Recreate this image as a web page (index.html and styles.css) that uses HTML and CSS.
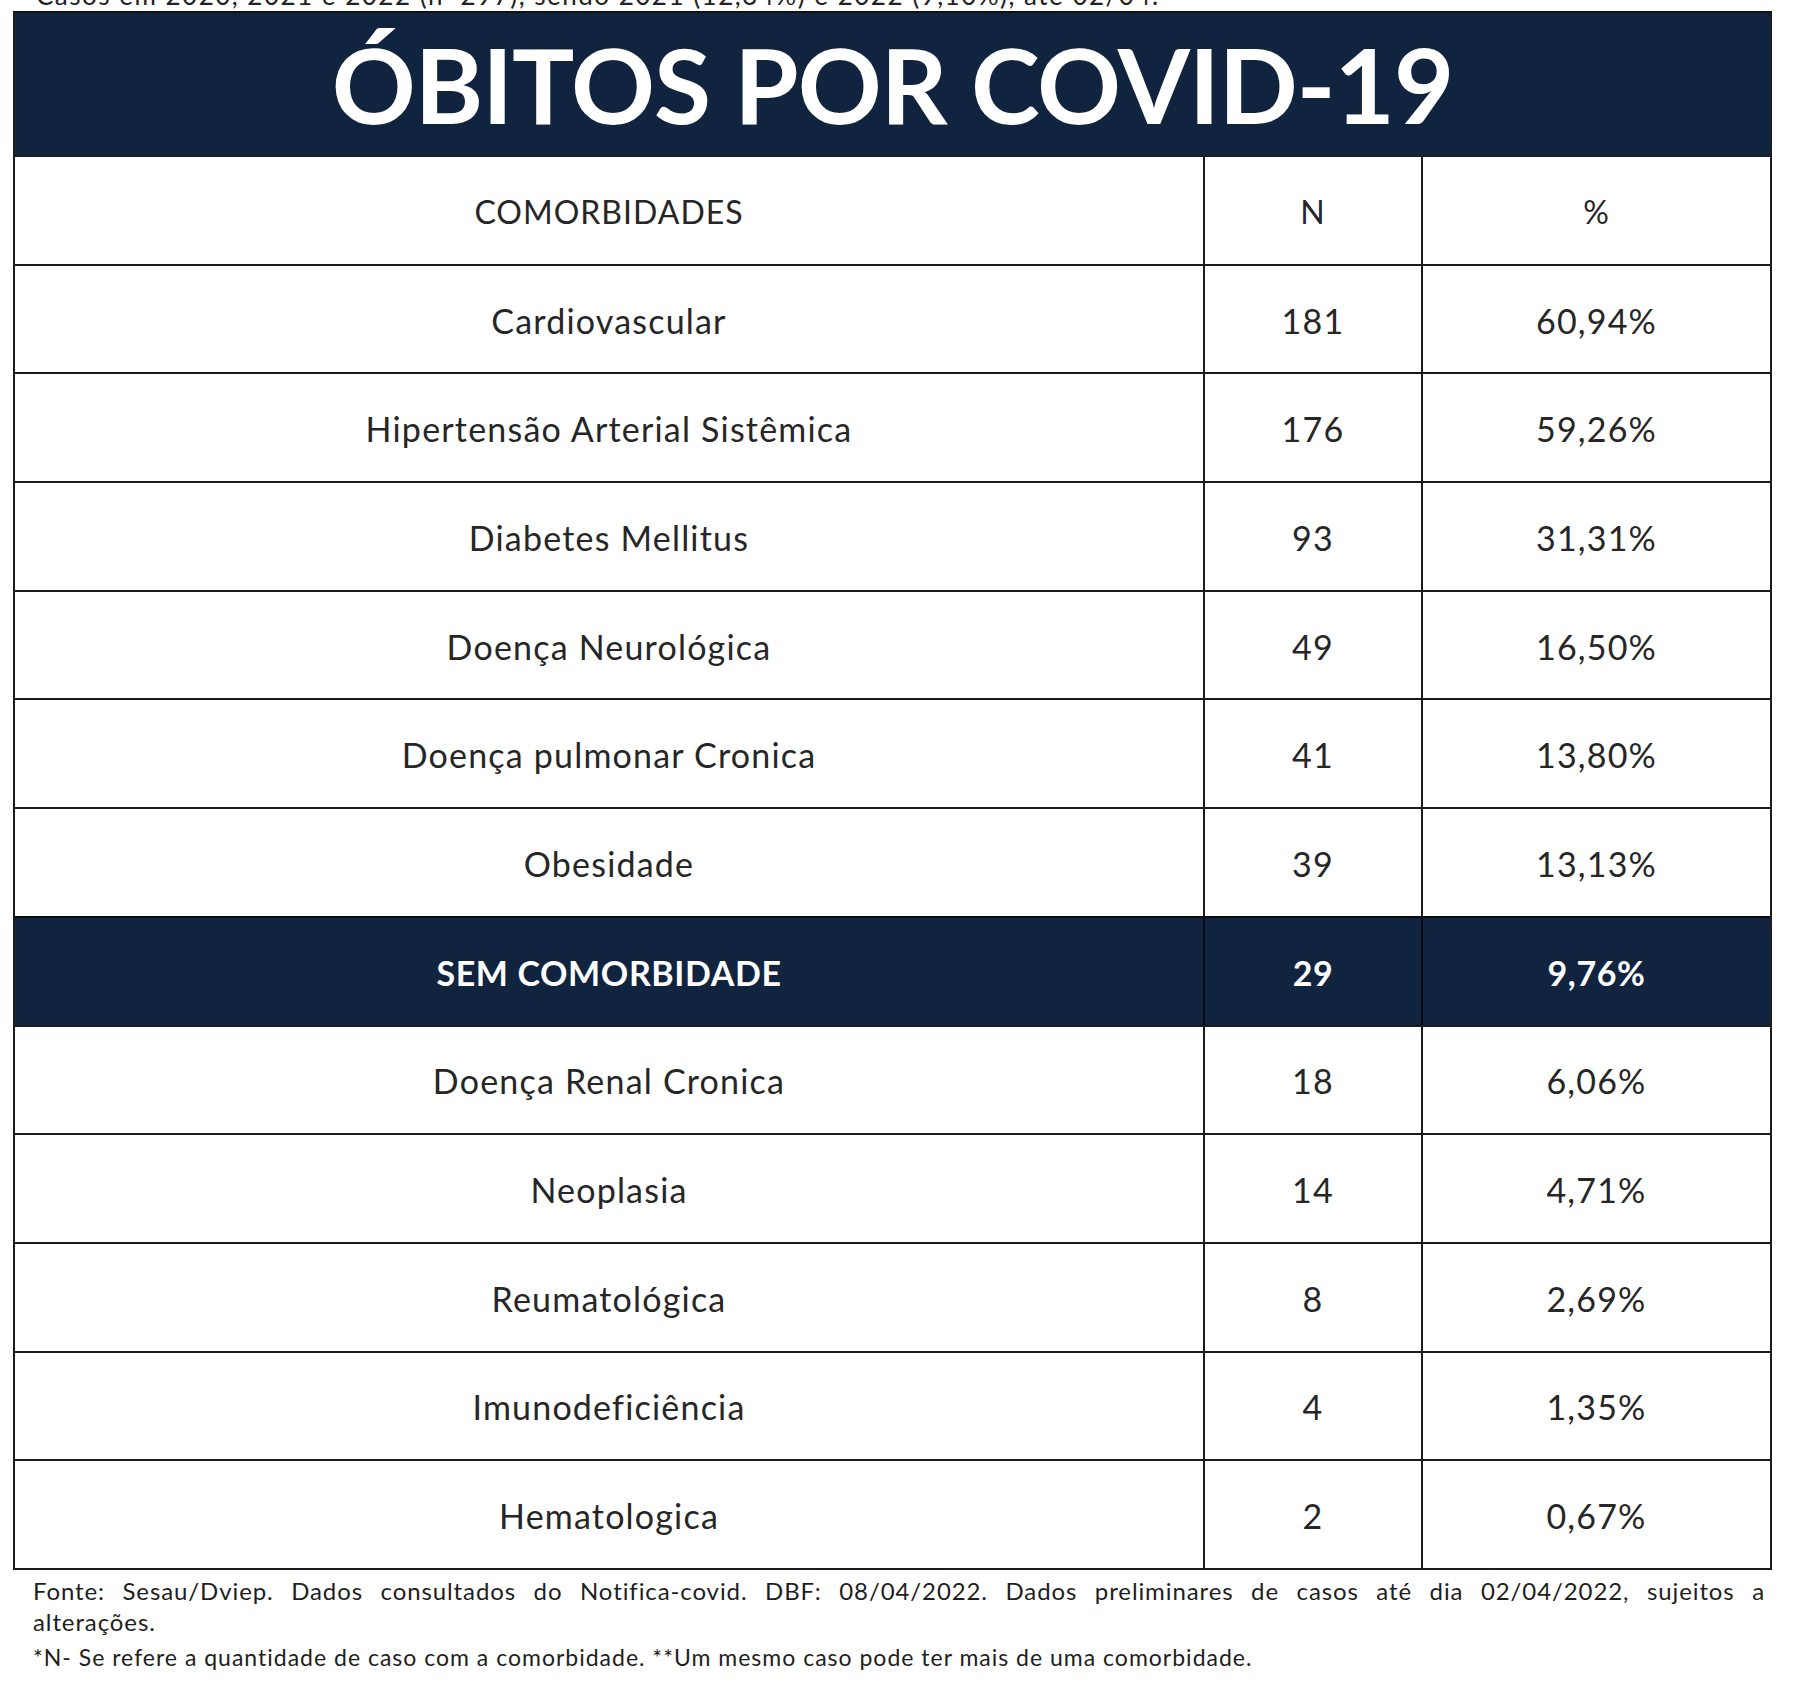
FILE: index.html
```html
<!DOCTYPE html>
<html lang="pt-BR">
<head>
<meta charset="utf-8">
<title>Óbitos por COVID-19 - Comorbidades</title>
<link rel="stylesheet" href="styles.css">
</head>
<body>
<div class="page">
  <div class="clip-line"><p>Casos em 2020, 2021 e 2022 (n=297), sendo 2021 (12,34%) e 2022 (9,10%), até 02/04.</p></div>
  <div class="sheet">
    <div class="title">ÓBITOS POR COVID-19</div>
    <div class="row head">
      <div class="cell">COMORBIDADES</div>
      <div class="cell">N</div>
      <div class="cell">%</div>
    </div>
    <div class="row"><div class="cell">Cardiovascular</div><div class="cell">181</div><div class="cell">60,94%</div></div>
    <div class="row"><div class="cell">Hipertensão Arterial Sistêmica</div><div class="cell">176</div><div class="cell">59,26%</div></div>
    <div class="row"><div class="cell">Diabetes Mellitus</div><div class="cell">93</div><div class="cell">31,31%</div></div>
    <div class="row"><div class="cell">Doença Neurológica</div><div class="cell">49</div><div class="cell">16,50%</div></div>
    <div class="row"><div class="cell">Doença pulmonar Cronica</div><div class="cell">41</div><div class="cell">13,80%</div></div>
    <div class="row"><div class="cell">Obesidade</div><div class="cell">39</div><div class="cell">13,13%</div></div>
    <div class="row highlight"><div class="cell">SEM COMORBIDADE</div><div class="cell">29</div><div class="cell">9,76%</div></div>
    <div class="row"><div class="cell">Doença Renal Cronica</div><div class="cell">18</div><div class="cell">6,06%</div></div>
    <div class="row"><div class="cell">Neoplasia</div><div class="cell">14</div><div class="cell">4,71%</div></div>
    <div class="row"><div class="cell">Reumatológica</div><div class="cell">8</div><div class="cell">2,69%</div></div>
    <div class="row"><div class="cell">Imunodeficiência</div><div class="cell">4</div><div class="cell">1,35%</div></div>
    <div class="row last"><div class="cell">Hematologica</div><div class="cell">2</div><div class="cell">0,67%</div></div>
  </div>
  <div class="notes">
    <p class="source">Fonte: Sesau/Dviep. Dados consultados do Notifica-covid. DBF: 08/04/2022. Dados preliminares de casos até dia 02/04/2022, sujeitos a</p>
    <p class="source-end">alterações.</p>
    <p class="remark">*N- Se refere a quantidade de caso com a comorbidade. **Um mesmo caso pode ter mais de uma comorbidade.</p>
  </div>
</div>
</body>
</html>
```

FILE: styles.css
```css
html, body {
  margin: 0;
  padding: 0;
  background: #ffffff;
}

body {
  font-family: Lato, "Open Sans", "Liberation Sans", sans-serif;
  color: #262626;
}

.page {
  width: 1800px;
  height: 1702px;
  overflow: hidden;
}

.clip-line {
  height: 9px;
  overflow: hidden;
  padding-left: 36px;
  margin-bottom: 2px;
}

.clip-line p {
  margin: -19px 0 0 0;
  font-size: 26px;
  line-height: 28px;
  letter-spacing: 1.5px;
  white-space: nowrap;
  color: #222;
}

.sheet {
  margin-left: 13px;
  width: 1759px;
  box-sizing: border-box;
  border-left: 2px solid #1c1c1c;
  border-right: 2px solid #1c1c1c;
}

.title {
  height: 144px;
  box-sizing: border-box;
  border-top: 2px solid #111;
  background: #10233f;
  color: #ffffff;
  font-weight: 700;
  font-size: 104px;
  line-height: 142px;
  text-align: center;
  letter-spacing: -1px;
}

.row {
  display: grid;
  grid-template-columns: 1188px 218px 1fr;
  height: 108.7px;
  box-sizing: border-box;
  border-top: 2px solid #1c1c1c;
}

.row.last {
  height: 110.7px;
  border-bottom: 2px solid #1c1c1c;
}

.cell {
  display: flex;
  align-items: center;
  justify-content: center;
  font-size: 34px;
  letter-spacing: 1.2px;
  padding-top: 2px;
  box-sizing: border-box;
}

.cell + .cell {
  border-left: 2px solid #1c1c1c;
}

.head .cell {
  font-size: 32px;
  letter-spacing: 1px;
}

.highlight {
  background: #10233f;
  color: #ffffff;
  border-top-color: #0a0a0a;
}

.highlight .cell {
  font-weight: 700;
  letter-spacing: 0.6px;
}

.highlight .cell + .cell {
  border-left-color: #050a14;
}

.notes {
  padding: 0 35px 0 33px;
}

.notes p {
  margin: 0;
  color: #1e1e1e;
}

.source {
  font-size: 24px;
  letter-spacing: 0.9px;
  line-height: 30px;
  padding-top: 6px;
  text-align: justify;
  text-align-last: justify;
  white-space: nowrap;
}

.source-end {
  font-size: 24px;
  letter-spacing: 0.9px;
  line-height: 32px;
}

.remark {
  font-size: 23px;
  letter-spacing: 1px;
  line-height: 38px;
}
```
